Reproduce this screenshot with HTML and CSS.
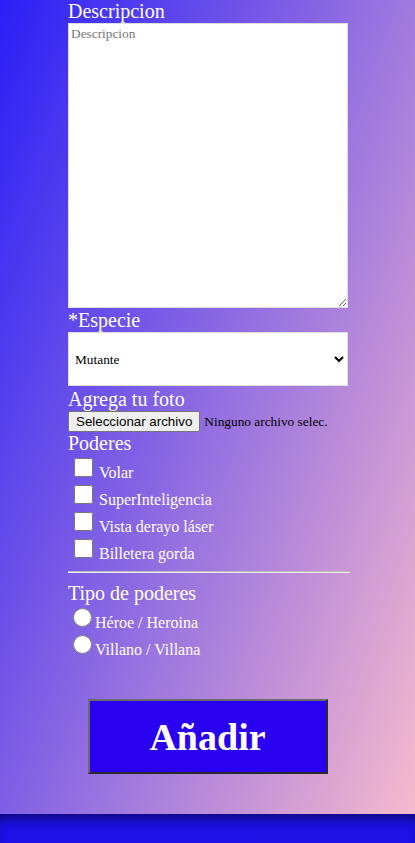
FILE: index.html
```html
<!DOCTYPE html>
<html lang="es">
<head>
    <meta charset="UTF-8">
    <meta name="viewport" content="width=device-width, initial-scale=1.0">
    <title>Agregar personaje</title>
    <link rel="stylesheet" href="styles.css">
</head>
<body>
    <div class="panel">
        <form class="form" onsubmit="return false">
            <label class="field-label" for="descripcion">Descripcion</label>
            <textarea id="descripcion" class="text-box" placeholder="Descripcion"></textarea>

            <label class="field-label" for="especie">*Especie</label>
            <select id="especie" class="select-box">
                <option>Mutante</option>
                <option>Humano</option>
                <option>Alien</option>
            </select>

            <label class="field-label" for="foto">Agrega tu foto</label>
            <label class="file-row">
                <input type="file" id="foto" class="file-hidden">
                <span class="file-btn">Seleccionar archivo</span>
                <span class="file-name">Ninguno archivo selec.</span>
            </label>

            <div class="field-label">Poderes</div>
            <label class="check-row"><input type="checkbox" class="check"><span>Volar</span></label>
            <label class="check-row"><input type="checkbox" class="check"><span>SuperInteligencia</span></label>
            <label class="check-row"><input type="checkbox" class="check"><span>Vista derayo láser</span></label>
            <label class="check-row"><input type="checkbox" class="check"><span>Billetera gorda</span></label>

            <hr class="divider">

            <div class="field-label">Tipo de poderes</div>
            <label class="radio-row"><input type="radio" name="tipo" class="radio"><span>Héroe / Heroina</span></label>
            <label class="radio-row"><input type="radio" name="tipo" class="radio"><span>Villano / Villana</span></label>
        </form>
        <div class="actions">
            <button class="add-btn">Añadir</button>
        </div>
    </div>
    <div class="page-end"></div>
</body>
</html>
```

FILE: styles.css
```css
* {
    box-sizing: border-box;
}
body {
    margin: 0;
    background-color: #1b12e2;
    font-family: "Liberation Serif", serif;
    color: #fff;
}
.panel {
    background: linear-gradient(110deg, blue -20%, pink 104%);
    padding: 0 0 40px;
}
.page-end {
    height: 40px;
    background: linear-gradient(180deg, #1a10e2, #1c14ea);
    box-shadow: inset 0 10px 10px -4px rgba(0, 0, 0, 0.4);
}
.form {
    width: 282px;
    margin-left: 68px;
}
.field-label {
    display: block;
    font-size: 20px;
    line-height: 23px;
}
.text-box {
    display: block;
    width: 280px;
    height: 285px;
    margin: 0 0 1px;
    padding: 2px;
    border: 1px solid #ddd;
    font-family: "Liberation Serif", serif;
    font-size: 13.33px;
    resize: both;
}
.select-box {
    display: block;
    width: 280px;
    height: 54px;
    margin: 0 0 2px;
    padding: 0 2px;
    border: 1px solid #ddd;
    background: #fff;
    font-family: "Liberation Serif", serif;
    font-size: 13.33px;
    color: #000;
}
.file-row {
    display: flex;
    align-items: center;
    height: 21px;
}
.file-hidden {
    display: none;
}
.file-btn {
    padding: 2px 7px;
    background-color: #efefef;
    border: 1px solid #767676;
    border-radius: 2px;
    font-family: "Liberation Sans", Arial, sans-serif;
    font-size: 13.33px;
    color: #000;
}
.file-name {
    margin-left: 4px;
    font-size: 13.33px;
    color: #000;
}
.check-row,
.radio-row {
    display: flex;
    align-items: flex-end;
    height: 27px;
    font-size: 16px;
    line-height: 18px;
}
.check {
    width: 19px;
    height: 19px;
    margin: 0 6px 5px 6px;
}
.radio {
    width: 19px;
    height: 19px;
    margin: 0 3px 5px 5px;
}
.divider {
    margin: 8px 0 9px;
    border: none;
    border-top: 1px solid #b9b9b9;
    border-bottom: 1px solid #eee;
}
.actions {
    display: flex;
    justify-content: center;
    margin-top: 40px;
}
.add-btn {
    width: 240px;
    height: 75px;
    background-color: #2900f0;
    border: 2px solid;
    border-color: #6b6b6b #2a2a2a #2a2a2a #6b6b6b;
    color: #fff;
    font-family: "Liberation Serif", serif;
    font-size: 38px;
    font-weight: bold;
    cursor: pointer;
}
```
